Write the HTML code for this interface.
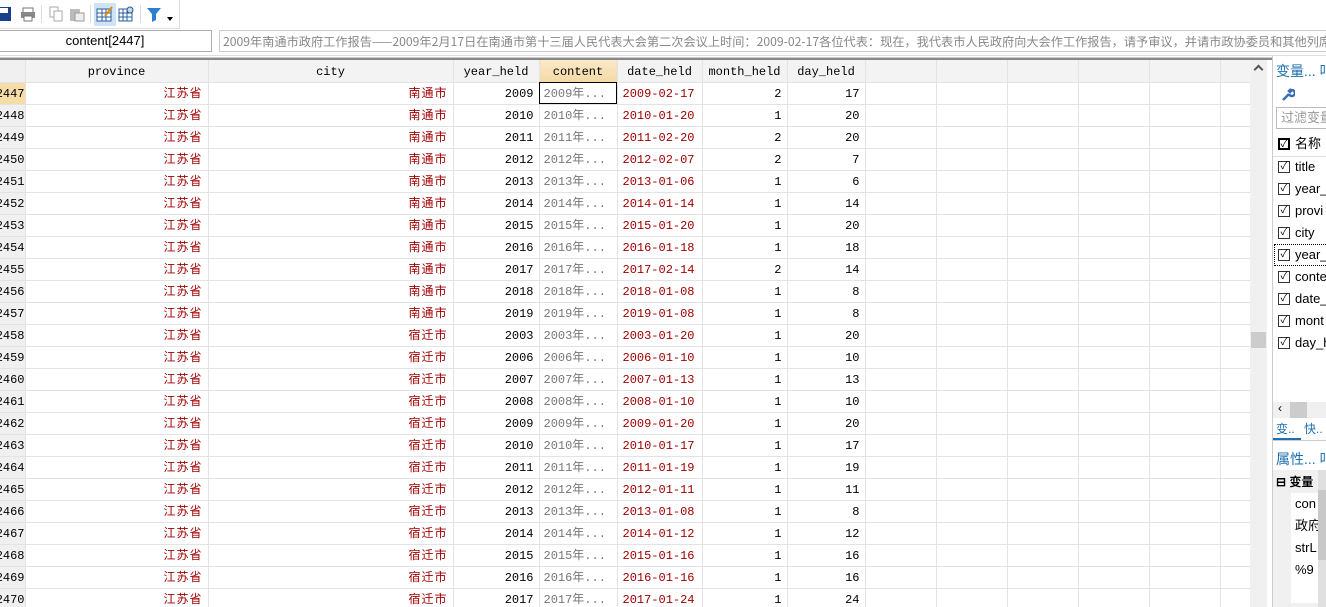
<!DOCTYPE html><html><head><meta charset="utf-8"><style>
*{margin:0;padding:0;box-sizing:border-box}
body{width:1326px;height:607px;overflow:hidden;background:#fff;font-family:"Liberation Sans","Noto Sans CJK SC",sans-serif;position:relative}
.tb{position:absolute;left:0;top:0;width:180px;height:29px;border-right:1px solid #ddd;border-bottom:1px solid #ddd}
.ic{position:absolute;top:5px;width:18px;height:18px}
.fb{position:absolute;top:29px;left:0;width:1326px;height:27px;background:#fff;border-bottom:1px solid #ddd}
.name{position:absolute;left:-2px;top:1px;width:214px;height:22px;border:1px solid #adadad;font-size:13px;text-align:center;line-height:20px}
.val{position:absolute;left:219px;top:1px;width:1110px;height:22px;border:1px solid #ccc;border-right:none;font-family:"Noto Sans CJK SC",sans-serif;font-size:12.2px;color:#888;line-height:20px;padding-left:3px;white-space:nowrap;overflow:hidden}
.gtop{position:absolute;top:57px;left:0;width:1272px;height:3px;background:#888;border-top:1px solid #ccc}
.grid{position:absolute;top:60px;left:0;width:1250px;height:547px;overflow:hidden}
table{border-collapse:collapse;table-layout:fixed;width:1250px;font-family:"Liberation Mono","Noto Sans CJK SC",monospace;font-size:12px}
td,th{height:22px;line-height:18px;padding:2px 5px 0;border-right:1px solid #e3e3e3;border-bottom:1px solid #e3e3e3;white-space:nowrap;overflow:hidden;text-align:right;vertical-align:middle}
th{background:#f3f3f3;font-weight:normal;text-align:center;color:#000}
th.c{background:linear-gradient(#fbe9c8,#f3d9a6)}
td:first-child,th:first-child{background:#f0f0f0;padding:2px 0 0;text-align:left;direction:rtl}
td.r{color:#a00000}td.g{color:#777;text-align:left;padding:1px 0 0 4px;line-height:20px}td.zh{font-family:"Noto Sans CJK SC",sans-serif;font-size:12px;padding-top:0;line-height:20px;letter-spacing:1px}
tr.s td:first-child{background:#f6dca9}
.sel{outline:1px solid #000;outline-offset:-1px}
.sb{position:absolute;left:1250px;top:60px;width:17px;height:547px;background:#f0f0f0}
.rp{position:absolute;left:1272px;top:56px;width:54px;height:551px;background:#fff;border-left:1px solid #ccc;font-size:13px;overflow:hidden}
.vr{position:absolute;left:5px;height:22px;line-height:22px;white-space:nowrap}
.cb{position:absolute;left:0;top:5px;width:12px;height:12px;border:1px solid #333;font-size:10px;line-height:10px;text-align:center}
.vr .t{margin-left:17px}
</style></head><body>
<div class="tb">
<svg class="ic" style="left:0" viewBox="0 0 18 18"><rect x="-4" y="2" width="15" height="14" fill="#1b3f8f"/><rect x="0" y="3" width="8" height="5" fill="#fff"/></svg>
<svg class="ic" style="left:19px" viewBox="0 0 18 18"><rect x="4" y="3" width="10" height="5" fill="#fff" stroke="#777"/><rect x="2" y="7" width="14" height="6" fill="#888"/><rect x="5" y="11" width="8" height="5" fill="#fff" stroke="#777"/></svg>
<div style="position:absolute;left:41px;top:5px;width:1px;height:18px;background:#ddd"></div>
<svg class="ic" style="left:47px" viewBox="0 0 18 18"><rect x="3" y="2" width="8" height="10" fill="#fff" stroke="#aaa"/><rect x="7" y="6" width="8" height="10" fill="#fff" stroke="#aaa"/></svg>
<svg class="ic" style="left:68px" viewBox="0 0 18 18"><rect x="2" y="4" width="10" height="12" fill="#bbb"/><rect x="7" y="8" width="9" height="8" fill="#eee" stroke="#999"/></svg>
<div style="position:absolute;left:90px;top:5px;width:1px;height:18px;background:#ddd"></div>
<div style="position:absolute;left:94px;top:3px;width:22px;height:23px;background:#cde3f7"></div>
<svg class="ic" style="left:96px" viewBox="0 0 18 18"><rect x="1" y="4" width="14" height="12" fill="#fff" stroke="#2d5c9c"/><path d="M1 8h14M1 12h14M6 4v12M10 4v12" stroke="#2d5c9c"/><path d="M9 11l7-9" stroke="#e08a00" stroke-width="2"/></svg>
<svg class="ic" style="left:118px" viewBox="0 0 18 18"><rect x="1" y="4" width="13" height="12" fill="#fff" stroke="#2d5c9c"/><path d="M1 8h13M1 12h13M5 4v12M9 4v12" stroke="#2d5c9c"/><circle cx="12" cy="5" r="3" fill="#bde" stroke="#357"/></svg>
<div style="position:absolute;left:140px;top:5px;width:1px;height:18px;background:#ddd"></div>
<svg class="ic" style="left:146px" viewBox="0 0 18 18"><path d="M1 3h14l-5 6v6l-4 2v-8z" fill="#2b7fd1"/></svg>
<div style="position:absolute;left:167px;top:17px;border:3px solid transparent;border-top:4px solid #000"></div>
</div>
<div class="fb"><div class="name">content[2447]</div><div class="val">2009年南通市政府工作报告——2009年2月17日在南通市第十三届人民代表大会第二次会议上时间：2009-02-17各位代表：现在，我代表市人民政府向大会作工作报告，请予审议，并请市政协委员和其他列席</div></div>
<div class="gtop"></div>
<div class="grid"><table>
<colgroup><col style="width:25px"><col style="width:183px"><col style="width:245px"><col style="width:86px"><col style="width:78px"><col style="width:85px"><col style="width:85px"><col style="width:78px"><col style="width:71px"><col style="width:71px"><col style="width:71px"><col style="width:71px"><col style="width:71px"><col style="width:30px"></colgroup>
<tr><th></th><th>province</th><th>city</th><th>year_held</th><th class="c">content</th><th>date_held</th><th>month_held</th><th>day_held</th><th></th><th></th><th></th><th></th><th></th><th></th></tr>
<tr class="s"><td>2447</td><td class="r zh">江苏省</td><td class="r zh">南通市</td><td>2009</td><td class="g sel">2009年...</td><td class="r" style="text-align:left">2009-02-17</td><td>2</td><td>17</td><td></td><td></td><td></td><td></td><td></td><td></td></tr>
<tr><td>2448</td><td class="r zh">江苏省</td><td class="r zh">南通市</td><td>2010</td><td class="g">2010年...</td><td class="r" style="text-align:left">2010-01-20</td><td>1</td><td>20</td><td></td><td></td><td></td><td></td><td></td><td></td></tr>
<tr><td>2449</td><td class="r zh">江苏省</td><td class="r zh">南通市</td><td>2011</td><td class="g">2011年...</td><td class="r" style="text-align:left">2011-02-20</td><td>2</td><td>20</td><td></td><td></td><td></td><td></td><td></td><td></td></tr>
<tr><td>2450</td><td class="r zh">江苏省</td><td class="r zh">南通市</td><td>2012</td><td class="g">2012年...</td><td class="r" style="text-align:left">2012-02-07</td><td>2</td><td>7</td><td></td><td></td><td></td><td></td><td></td><td></td></tr>
<tr><td>2451</td><td class="r zh">江苏省</td><td class="r zh">南通市</td><td>2013</td><td class="g">2013年...</td><td class="r" style="text-align:left">2013-01-06</td><td>1</td><td>6</td><td></td><td></td><td></td><td></td><td></td><td></td></tr>
<tr><td>2452</td><td class="r zh">江苏省</td><td class="r zh">南通市</td><td>2014</td><td class="g">2014年...</td><td class="r" style="text-align:left">2014-01-14</td><td>1</td><td>14</td><td></td><td></td><td></td><td></td><td></td><td></td></tr>
<tr><td>2453</td><td class="r zh">江苏省</td><td class="r zh">南通市</td><td>2015</td><td class="g">2015年...</td><td class="r" style="text-align:left">2015-01-20</td><td>1</td><td>20</td><td></td><td></td><td></td><td></td><td></td><td></td></tr>
<tr><td>2454</td><td class="r zh">江苏省</td><td class="r zh">南通市</td><td>2016</td><td class="g">2016年...</td><td class="r" style="text-align:left">2016-01-18</td><td>1</td><td>18</td><td></td><td></td><td></td><td></td><td></td><td></td></tr>
<tr><td>2455</td><td class="r zh">江苏省</td><td class="r zh">南通市</td><td>2017</td><td class="g">2017年...</td><td class="r" style="text-align:left">2017-02-14</td><td>2</td><td>14</td><td></td><td></td><td></td><td></td><td></td><td></td></tr>
<tr><td>2456</td><td class="r zh">江苏省</td><td class="r zh">南通市</td><td>2018</td><td class="g">2018年...</td><td class="r" style="text-align:left">2018-01-08</td><td>1</td><td>8</td><td></td><td></td><td></td><td></td><td></td><td></td></tr>
<tr><td>2457</td><td class="r zh">江苏省</td><td class="r zh">南通市</td><td>2019</td><td class="g">2019年...</td><td class="r" style="text-align:left">2019-01-08</td><td>1</td><td>8</td><td></td><td></td><td></td><td></td><td></td><td></td></tr>
<tr><td>2458</td><td class="r zh">江苏省</td><td class="r zh">宿迁市</td><td>2003</td><td class="g">2003年...</td><td class="r" style="text-align:left">2003-01-20</td><td>1</td><td>20</td><td></td><td></td><td></td><td></td><td></td><td></td></tr>
<tr><td>2459</td><td class="r zh">江苏省</td><td class="r zh">宿迁市</td><td>2006</td><td class="g">2006年...</td><td class="r" style="text-align:left">2006-01-10</td><td>1</td><td>10</td><td></td><td></td><td></td><td></td><td></td><td></td></tr>
<tr><td>2460</td><td class="r zh">江苏省</td><td class="r zh">宿迁市</td><td>2007</td><td class="g">2007年...</td><td class="r" style="text-align:left">2007-01-13</td><td>1</td><td>13</td><td></td><td></td><td></td><td></td><td></td><td></td></tr>
<tr><td>2461</td><td class="r zh">江苏省</td><td class="r zh">宿迁市</td><td>2008</td><td class="g">2008年...</td><td class="r" style="text-align:left">2008-01-10</td><td>1</td><td>10</td><td></td><td></td><td></td><td></td><td></td><td></td></tr>
<tr><td>2462</td><td class="r zh">江苏省</td><td class="r zh">宿迁市</td><td>2009</td><td class="g">2009年...</td><td class="r" style="text-align:left">2009-01-20</td><td>1</td><td>20</td><td></td><td></td><td></td><td></td><td></td><td></td></tr>
<tr><td>2463</td><td class="r zh">江苏省</td><td class="r zh">宿迁市</td><td>2010</td><td class="g">2010年...</td><td class="r" style="text-align:left">2010-01-17</td><td>1</td><td>17</td><td></td><td></td><td></td><td></td><td></td><td></td></tr>
<tr><td>2464</td><td class="r zh">江苏省</td><td class="r zh">宿迁市</td><td>2011</td><td class="g">2011年...</td><td class="r" style="text-align:left">2011-01-19</td><td>1</td><td>19</td><td></td><td></td><td></td><td></td><td></td><td></td></tr>
<tr><td>2465</td><td class="r zh">江苏省</td><td class="r zh">宿迁市</td><td>2012</td><td class="g">2012年...</td><td class="r" style="text-align:left">2012-01-11</td><td>1</td><td>11</td><td></td><td></td><td></td><td></td><td></td><td></td></tr>
<tr><td>2466</td><td class="r zh">江苏省</td><td class="r zh">宿迁市</td><td>2013</td><td class="g">2013年...</td><td class="r" style="text-align:left">2013-01-08</td><td>1</td><td>8</td><td></td><td></td><td></td><td></td><td></td><td></td></tr>
<tr><td>2467</td><td class="r zh">江苏省</td><td class="r zh">宿迁市</td><td>2014</td><td class="g">2014年...</td><td class="r" style="text-align:left">2014-01-12</td><td>1</td><td>12</td><td></td><td></td><td></td><td></td><td></td><td></td></tr>
<tr><td>2468</td><td class="r zh">江苏省</td><td class="r zh">宿迁市</td><td>2015</td><td class="g">2015年...</td><td class="r" style="text-align:left">2015-01-16</td><td>1</td><td>16</td><td></td><td></td><td></td><td></td><td></td><td></td></tr>
<tr><td>2469</td><td class="r zh">江苏省</td><td class="r zh">宿迁市</td><td>2016</td><td class="g">2016年...</td><td class="r" style="text-align:left">2016-01-16</td><td>1</td><td>16</td><td></td><td></td><td></td><td></td><td></td><td></td></tr>
<tr><td>2470</td><td class="r zh">江苏省</td><td class="r zh">宿迁市</td><td>2017</td><td class="g">2017年...</td><td class="r" style="text-align:left">2017-01-24</td><td>1</td><td>24</td><td></td><td></td><td></td><td></td><td></td><td></td></tr>
</table></div>
<div class="sb"><div style="position:absolute;left:5px;top:6px;width:7px;height:7px;border-left:2px solid #555;border-top:2px solid #555;transform:rotate(45deg)"></div><div style="position:absolute;left:1px;top:272px;width:15px;height:16px;background:#ccc"></div></div>
<div class="rp">
<div class="vr" style="top:4px;left:3px;color:#1e6fb0;font-size:14px">变量... 卟</div>
<svg style="position:absolute;left:8px;top:32px" width="14" height="14" viewBox="0 0 14 14"><path d="M2 12l6-6M8 6a3 3 0 1 0 3-4l-2 2-1-1 2-2" stroke="#3a6fb0" stroke-width="2.5" fill="none"/></svg>
<div style="position:absolute;left:3px;top:51px;width:60px;height:22px;border:1px solid #bbb;color:#999;line-height:20px;padding-left:4px">过滤变量</div>
<div class="vr" style="top:77px"><span class="cb" style="border-width:2px;border-color:#000">✓</span><span class="t">名称</span></div>
<div style="position:absolute;left:0;top:100px;width:60px;height:1px;background:#ddd"></div>
<div class="vr" style="top:100px"><span class="cb">✓</span><span class="t">title</span></div>
<div class="vr" style="top:122px"><span class="cb">✓</span><span class="t">year_t</span></div>
<div class="vr" style="top:144px"><span class="cb">✓</span><span class="t">provi</span></div>
<div class="vr" style="top:166px"><span class="cb">✓</span><span class="t">city</span></div>
<div style="position:absolute;left:1px;top:188px;width:60px;height:22px;outline:1px dotted #000;outline-offset:-1px"></div>
<div class="vr" style="top:188px"><span class="cb">✓</span><span class="t">year_</span></div>
<div class="vr" style="top:210px"><span class="cb">✓</span><span class="t">conte</span></div>
<div class="vr" style="top:232px"><span class="cb">✓</span><span class="t">date_</span></div>
<div class="vr" style="top:254px"><span class="cb">✓</span><span class="t">mont</span></div>
<div class="vr" style="top:276px"><span class="cb">✓</span><span class="t">day_h</span></div>
<div style="position:absolute;left:0;top:346px;width:60px;height:16px;background:#f0f0f0"><span style="position:absolute;left:5px;top:-1px;font-size:12px">‹</span><div style="position:absolute;left:17px;top:0;width:17px;height:16px;background:#ccc"></div></div>
<div class="vr" style="top:362px;left:3px;color:#1e6fb0;font-size:12px">变.. <span style="color:#1e6fb0;margin-left:6px">快..</span></div>
<div style="position:absolute;left:0;top:382px;width:28px;height:2px;background:#1e6fb0"></div>
<div style="position:absolute;left:0;top:384px;width:60px;height:1px;background:#ccc"></div>
<div class="vr" style="top:392px;left:3px;color:#1e6fb0;font-size:14px">属性... 卟</div>
<div style="position:absolute;left:0;top:414px;width:60px;height:140px;background:#f0f0f0"></div>
<div class="vr" style="top:415px;left:3px;font-weight:bold;font-size:12px">⊟ 变量</div>
<div style="position:absolute;left:18px;top:437px;width:40px;height:110px;background:#fff"></div>
<div class="vr" style="top:437px;left:22px">con</div>
<div class="vr" style="top:459px;left:22px">政府</div>
<div class="vr" style="top:481px;left:22px">strL</div>
<div class="vr" style="top:503px;left:22px">%9</div>
<div style="position:absolute;left:45px;top:414px;width:9px;height:140px;background:#e0e0e0"><div style="position:absolute;top:20px;width:9px;height:70px;background:#c8c8c8"></div></div>
</div>
</body></html>
